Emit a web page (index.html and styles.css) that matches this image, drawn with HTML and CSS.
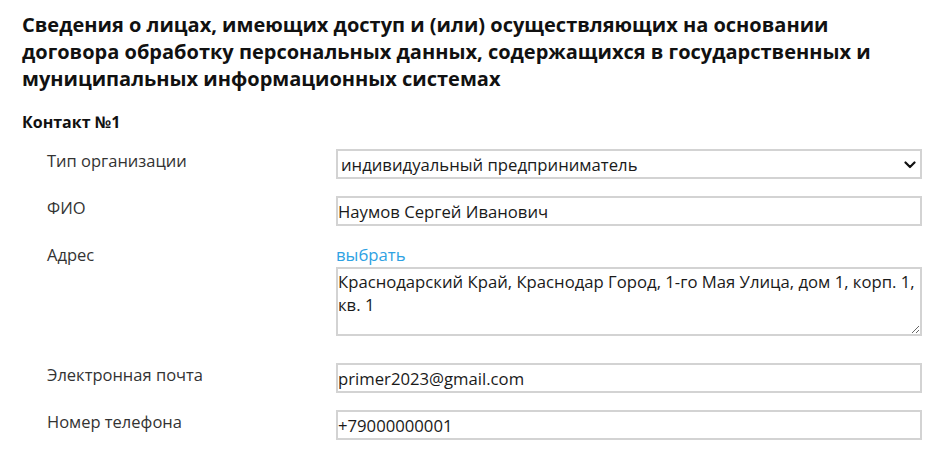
FILE: index.html
```html
<!DOCTYPE html>
<html lang="ru">
<head>
<meta charset="utf-8">
<title>Сведения о лицах</title>
<link rel="stylesheet" href="styles.css">
</head>
<body>
<div class="page">
  <h1 class="title">Сведения о лицах, имеющих доступ и (или) осуществляющих на основании договора обработку персональных данных, содержащихся в государственных и муниципальных информационных системах</h1>
  <h2 class="contact">Контакт №1</h2>
  <div class="form">
    <div class="label">Тип организации</div>
    <div class="field">
      <div class="select-wrap">
        <select class="select">
          <option>индивидуальный предприниматель</option>
        </select>
        <svg class="chevron" width="12" height="8" viewBox="0 0 12 8"><path d="M1.5 1.5 L6 6 L10.5 1.5" fill="none" stroke="#111" stroke-width="2.2" stroke-linecap="round" stroke-linejoin="round"/></svg>
      </div>
    </div>

    <div class="label">ФИО</div>
    <div class="field"><input class="input" type="text" value="Наумов Сергей Иванович"></div>

    <div class="label">Адрес</div>
    <div class="field field-address">
      <a class="link" href="#">выбрать</a>
      <textarea class="textarea">Краснодарский Край, Краснодар Город, 1-го Мая Улица, дом 1, корп. 1, кв. 1</textarea>
    </div>

    <div class="label">Электронная почта</div>
    <div class="field"><input class="input" type="text" value="primer2023@gmail.com"></div>

    <div class="label">Номер телефона</div>
    <div class="field"><input class="input" type="text" value="+79000000001"></div>
  </div>
</div>
</body>
</html>
```

FILE: styles.css
```css
html, body {
  margin: 0;
  padding: 0;
  background: #fff;
}
body {
  font-family: "Open Sans", "Noto Sans", sans-serif;
  color: #222;
}
.page {
  padding: 11px 21px 0 22px;
}
.title {
  margin: 0;
  font-size: 20px;
  line-height: 27px;
  font-weight: 700;
  color: #111;
}
.contact {
  margin: 20px 0 0;
  font-size: 16px;
  line-height: 20px;
  font-weight: 700;
  color: #111;
}
.form {
  margin-top: 17px;
  padding-left: 25px;
  display: grid;
  grid-template-columns: 289px 1fr;
  row-gap: 17px;
}
.label {
  font-size: 16.5px;
  line-height: 24px;
  color: #333;
}
.field {
  min-width: 0;
}
.select-wrap {
  position: relative;
}
.select {
  -webkit-appearance: none;
  appearance: none;
  display: block;
  width: 100%;
  height: 30px;
  box-sizing: border-box;
  border: 2px solid #d3d3d3;
  border-radius: 0;
  background: #fff;
  padding: 0 24px 0 3px;
  font-family: "Open Sans", sans-serif;
  font-size: 16.7px;
  color: #1a1a1a;
  outline: none;
}
.chevron {
  position: absolute;
  right: 6px;
  top: 12px;
  pointer-events: none;
}
.input {
  display: block;
  width: 100%;
  height: 30px;
  box-sizing: border-box;
  border: 2px solid #d3d3d3;
  border-radius: 0;
  padding: 0;
  margin: 0;
  font-family: "Open Sans", sans-serif;
  font-size: 16.7px;
  color: #1a1a1a;
  background: #fff;
  outline: none;
}
.field-address {
  padding-bottom: 10px;
}
.link {
  display: block;
  font-size: 16.7px;
  line-height: 24px;
  color: #2ea2e3;
  text-decoration: none;
}
.textarea {
  display: block;
  width: 100%;
  height: 69px;
  box-sizing: border-box;
  border: 2px solid #d3d3d3;
  border-radius: 0;
  padding: 2px 1px 1px 0;
  margin: 0;
  font-family: "Open Sans", sans-serif;
  font-size: 16.7px;
  line-height: 22.5px;
  color: #1a1a1a;
  background: #fff;
  outline: none;
  resize: vertical;
}
```
